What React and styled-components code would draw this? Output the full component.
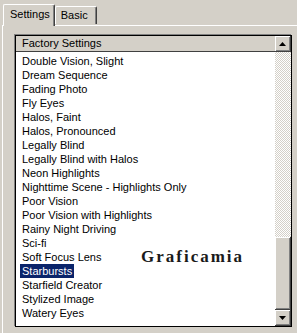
import React from "react";
import styled, { createGlobalStyle } from "styled-components";

const Global = createGlobalStyle`
  html, body { margin: 0; padding: 0; background: #d4d0c8; }
  body { font-family: "Liberation Sans", Arial, sans-serif; font-size: 11px; color: #000; }
`;

const Window = styled.div`
  position: relative;
  width: 297px;
  height: 333px;
  overflow: hidden;
  background: #d4d0c8;
`;

const TabRow = styled.div`
  display: flex;
  align-items: flex-end;
  height: 25px;
  padding-left: 3px;
  position: relative;
  z-index: 1;
`;

const Tab = styled.div`
  box-sizing: border-box;
  height: ${(p) => (p.$active ? "22px" : "18px")};
  margin-bottom: ${(p) => (p.$active ? "-1px" : "1px")};
  padding: ${(p) => (p.$active ? "0 4px 2px 6px" : "0 8px 0 5px")};
  display: flex;
  align-items: center;
  background: #d4d0c8;
  border-left: 1px solid #fff;
  border-top: 1px solid #fff;
  border-right: 1px solid #404040;
  box-shadow: inset -1px 0 0 #808080;
  border-top-left-radius: 2px;
  border-top-right-radius: 2px;
  font-size: 11px;
  line-height: 1;
`;

const Panel = styled.div`
  margin-left: 2px;
  width: 320px;
  height: 320px;
  border-top: 1px solid #fff;
  border-left: 1px solid #fff;
  box-sizing: border-box;
  padding: 9px 0 0 12px;
`;

const ListBox = styled.div`
  box-sizing: border-box;
  width: 277px;
  height: 292px;
  border: 1px solid #000;
  box-shadow: -1px -1px 0 #808080;
  background: #fff;
  display: flex;
`;

const ListMain = styled.div`
  flex: 1;
  display: flex;
  flex-direction: column;
  min-width: 0;
`;

const Header = styled.div`
  height: 15px;
  background: #d4d0c8;
  border-bottom: 1px solid #404040;
  display: flex;
  align-items: center;
  padding-left: 6px;
  font-size: 11px;
  line-height: 1;
`;

const Rows = styled.div`
  padding: 2px 0 0 4px;
  display: flex;
  flex-direction: column;
`;

const Row = styled.div`
  height: 14px;
  display: flex;
  align-items: center;
  white-space: nowrap;
`;

const Item = styled.span`
  padding: 0 2px;
  height: 14px;
  line-height: 14px;
  font-size: 11px;
  background: ${(p) => (p.$selected ? "#0a246a" : "transparent")};
  color: ${(p) => (p.$selected ? "#fff" : "#000")};
`;

const ScrollBar = styled.div`
  width: 16px;
  display: flex;
  flex-direction: column;
`;

const ScrollButton = styled.div`
  box-sizing: border-box;
  height: 16px;
  background: #d4d0c8;
  border-right: 1px solid #404040;
  border-bottom: 1px solid #404040;
  box-shadow: inset 1px 1px 0 #fff, inset -1px -1px 0 #808080;
  display: flex;
  align-items: center;
  justify-content: center;
`;

const Track = styled.div`
  flex: ${(p) => p.$grow};
  background-image: repeating-conic-gradient(#d4d0c8 0 25%, #ffffff 0 50%);
  background-size: 2px 2px;
`;

const Thumb = styled.div`
  box-sizing: border-box;
  height: ${(p) => p.$h}px;
  background: #d4d0c8;
  border-right: 1px solid #404040;
  border-bottom: 1px solid #404040;
  box-shadow: inset 1px 1px 0 #fff, inset -1px -1px 0 #808080;
`;

const Watermark = styled.div`
  position: absolute;
  left: 141px;
  top: 247px;
  font-family: "Liberation Serif", "Times New Roman", serif;
  font-weight: bold;
  font-size: 17px;
  letter-spacing: 2px;
  color: #1a1a1a;
  pointer-events: none;
`;

const Arrow = ({ down }) => (
  <svg width="7" height="4" viewBox="0 0 7 4">
    {down ? <path d="M0 0H7L3.5 4Z" fill="#000" /> : <path d="M0 4H7L3.5 0Z" fill="#000" />}
  </svg>
);

const items = [
  "Double Vision, Slight",
  "Dream Sequence",
  "Fading Photo",
  "Fly Eyes",
  "Halos, Faint",
  "Halos, Pronounced",
  "Legally Blind",
  "Legally Blind with Halos",
  "Neon Highlights",
  "Nighttime Scene - Highlights Only",
  "Poor Vision",
  "Poor Vision with Highlights",
  "Rainy Night Driving",
  "Sci-fi",
  "Soft Focus Lens",
  "Starbursts",
  "Starfield Creator",
  "Stylized Image",
  "Watery Eyes",
];

export default function App() {
  return (
    <>
      <Global />
      <Window>
        <TabRow>
          <Tab $active>Settings</Tab>
          <Tab>Basic</Tab>
        </TabRow>
        <Panel>
          <ListBox>
            <ListMain>
              <Header>Factory Settings</Header>
              <Rows>
                {items.map((t) => (
                  <Row key={t}>
                    <Item $selected={t === "Starbursts"}>{t}</Item>
                  </Row>
                ))}
              </Rows>
            </ListMain>
            <ScrollBar>
              <ScrollButton>
                <Arrow />
              </ScrollButton>
              <Track $grow={1} />
              <Thumb $h={73} />
              <ScrollButton>
                <Arrow down />
              </ScrollButton>
            </ScrollBar>
          </ListBox>
        </Panel>
        <Watermark>Graficamia</Watermark>
      </Window>
    </>
  );
}
